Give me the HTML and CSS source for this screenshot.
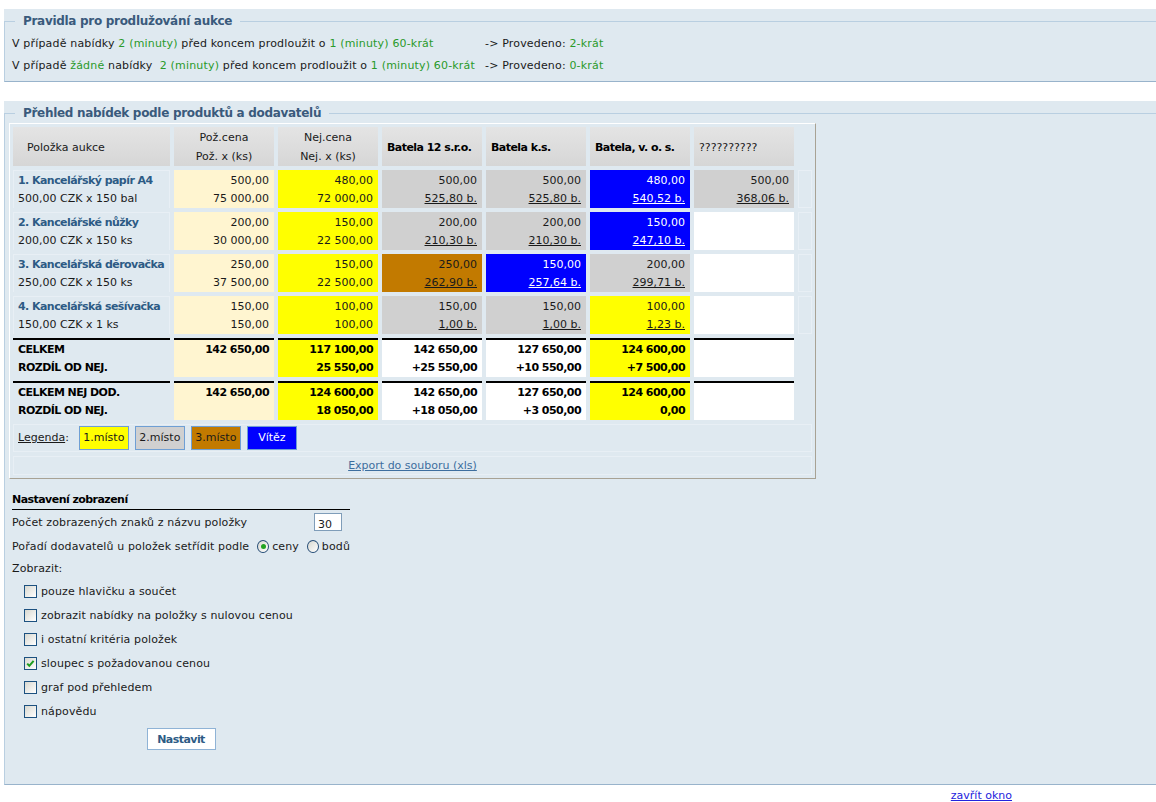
FILE: index.html
```html
<!DOCTYPE html>
<html lang="cs">
<head>
<meta charset="utf-8">
<title>Přehled nabídek</title>
<link rel="stylesheet" href="styles.css">
</head>
<body>
<div class="panel panel-rules">
  <fieldset class="frame">
    <legend>Pravidla pro prodlužování aukce</legend>
    <table class="rules">
      <tr>
        <td class="rule-text">V případě nabídky <span class="g">2 (minuty)</span> před koncem prodloužit o <span class="g">1 (minuty) 60-krát</span></td>
        <td>-&gt; Provedeno: <span class="g">2-krát</span></td>
      </tr>
      <tr>
        <td class="rule-text">V případě <span class="g">žádné</span> nabídky&nbsp; <span class="g">2 (minuty)</span> před koncem prodloužit o <span class="g">1 (minuty) 60-krát</span></td>
        <td>-&gt; Provedeno: <span class="g">0-krát</span></td>
      </tr>
    </table>
  </fieldset>
</div>

<div class="panel panel-offers">
  <fieldset class="frame">
    <legend>Přehled nabídek podle produktů a dodavatelů</legend>
    <div class="offer-box">
      <table class="offers">
        <colgroup>
          <col class="c-item"><col class="c-num"><col class="c-num"><col class="c-num"><col class="c-num"><col class="c-num"><col class="c-num"><col class="c-end">
        </colgroup>
        <thead>
          <tr>
            <th class="h h-item">Položka aukce</th>
            <th class="h h-center">Pož.cena<br>Pož. x (ks)</th>
            <th class="h h-center">Nej.cena<br>Nej. x (ks)</th>
            <th class="h h-sup">Batela 12 s.r.o.</th>
            <th class="h h-sup">Batela k.s.</th>
            <th class="h h-sup">Batela, v. o. s.</th>
            <th class="h h-unk">??????????</th>
            <th class="h-none"></th>
          </tr>
        </thead>
        <tbody>
          <tr>
            <td class="item"><span class="iname b">1. Kancelářský papír A4</span><br>500,00 CZK x 150 bal</td>
            <td class="num cream">500,00<br>75 000,00</td>
            <td class="num yellow">480,00<br>72 000,00</td>
            <td class="num gray">500,00<br><a class="pts">525,80 b.</a></td>
            <td class="num gray">500,00<br><a class="pts">525,80 b.</a></td>
            <td class="num blue">480,00<br><a class="pts">540,52 b.</a></td>
            <td class="num gray">500,00<br><a class="pts">368,06 b.</a></td>
            <td class="faint"></td>
          </tr>
          <tr>
            <td class="item"><span class="iname b">2. Kancelářské nůžky</span><br>200,00 CZK x 150 ks</td>
            <td class="num cream">200,00<br>30 000,00</td>
            <td class="num yellow">150,00<br>22 500,00</td>
            <td class="num gray">200,00<br><a class="pts">210,30 b.</a></td>
            <td class="num gray">200,00<br><a class="pts">210,30 b.</a></td>
            <td class="num blue">150,00<br><a class="pts">247,10 b.</a></td>
            <td class="white"></td>
            <td class="faint"></td>
          </tr>
          <tr>
            <td class="item"><span class="iname b">3. Kancelářská děrovačka</span><br>250,00 CZK x 150 ks</td>
            <td class="num cream">250,00<br>37 500,00</td>
            <td class="num yellow">150,00<br>22 500,00</td>
            <td class="num brown">250,00<br><a class="pts">262,90 b.</a></td>
            <td class="num blue">150,00<br><a class="pts">257,64 b.</a></td>
            <td class="num gray">200,00<br><a class="pts">299,71 b.</a></td>
            <td class="white"></td>
            <td class="faint"></td>
          </tr>
          <tr>
            <td class="item"><span class="iname b">4. Kancelářská sešívačka</span><br>150,00 CZK x 1 ks</td>
            <td class="num cream">150,00<br>150,00</td>
            <td class="num yellow">100,00<br>100,00</td>
            <td class="num gray">150,00<br><a class="pts">1,00 b.</a></td>
            <td class="num gray">150,00<br><a class="pts">1,00 b.</a></td>
            <td class="num yellow">100,00<br><a class="pts">1,23 b.</a></td>
            <td class="white"></td>
            <td class="faint"></td>
          </tr>
          <tr class="total">
            <td class="item b">CELKEM<br>ROZDÍL OD NEJ.</td>
            <td class="num cream b">142 650,00<br>&nbsp;</td>
            <td class="num yellow b">117 100,00<br>25 550,00</td>
            <td class="num white b">142 650,00<br>+25 550,00</td>
            <td class="num white b">127 650,00<br>+10 550,00</td>
            <td class="num yellow b">124 600,00<br>+7 500,00</td>
            <td class="white"></td>
            <td class="none"></td>
          </tr>
          <tr class="total">
            <td class="item b">CELKEM NEJ DOD.<br>ROZDÍL OD NEJ.</td>
            <td class="num cream b">142 650,00<br>&nbsp;</td>
            <td class="num yellow b">124 600,00<br>18 050,00</td>
            <td class="num white b">142 650,00<br>+18 050,00</td>
            <td class="num white b">127 650,00<br>+3 050,00</td>
            <td class="num yellow b">124 600,00<br>0,00</td>
            <td class="white"></td>
            <td class="none"></td>
          </tr>
          <tr>
            <td class="faint legend-cell" colspan="8">
              <div class="legend-line">
                <span class="legend-label"><u>Legenda</u>:</span>
                <span class="swatch sw-yellow">1.místo</span>
                <span class="swatch sw-gray">2.místo</span>
                <span class="swatch sw-brown">3.místo</span>
                <span class="swatch sw-blue">Vítěz</span>
              </div>
            </td>
          </tr>
          <tr>
            <td class="faint export-cell" colspan="8"><a class="export">Export do souboru (xls)</a></td>
          </tr>
        </tbody>
      </table>
    </div>

    <div class="settings">
      <div class="set-title b">Nastavení zobrazení</div>
      <div class="set-row">
        <span>Počet zobrazených znaků z názvu položky</span>
        <span class="count-input">30</span>
      </div>
      <div class="set-row">
        <span>Pořadí dodavatelů u položek setřídit podle</span>
        <span class="radio on"></span><span>ceny</span>
        <span class="radio"></span><span>bodů</span>
      </div>
      <div class="set-row show-label">Zobrazit:</div>
      <div class="set-row cb-row"><span class="cb"></span>pouze hlavičku a součet</div>
      <div class="set-row cb-row"><span class="cb"></span>zobrazit nabídky na položky s nulovou cenou</div>
      <div class="set-row cb-row"><span class="cb"></span>i ostatní kritéria položek</div>
      <div class="set-row cb-row"><span class="cb"><svg width="11" height="11" viewBox="0 0 11 11"><path d="M2.2 5.6 L4.3 7.8 L8.6 2.8" fill="none" stroke="#1f9e1f" stroke-width="2"/></svg></span>sloupec s požadovanou cenou</div>
      <div class="set-row cb-row"><span class="cb"></span>graf pod přehledem</div>
      <div class="set-row cb-row"><span class="cb"></span>nápovědu</div>
      <div class="btn-row"><button class="btn b" type="button">Nastavit</button></div>
    </div>
  </fieldset>
</div>

<div class="footer"><a class="close-link" href="#">zavřít okno</a></div>
</body>
</html>
```

FILE: styles.css
```css
body {
  margin: 0;
  font-family: "DejaVu Sans", Verdana, sans-serif;
  font-size: 11px;
  color: #1a1a1a;
  background: #fff;
}

.b {
  font-weight: bold;
  letter-spacing: -0.55px;
}

.panel {
  background: #dfe9f0;
  margin-left: 4px;
  padding-top: 4px;
}

.panel-rules { margin-top: 9px; }
.panel-offers { margin-top: 19px; }

.frame {
  margin: 0;
  min-width: 0;
  border: 1px solid #b9cfe1;
  border-right: 0;
  border-bottom-color: #98b3cb;
}

.panel-rules .frame { padding: 4px 0 4px 7px; }
.panel-offers .frame { padding: 2px 0 0 4px; }

legend {
  font-size: 12px;
  font-weight: bold;
  letter-spacing: -0.3px;
  color: #3a5a7c;
  line-height: 16px;
  padding: 0 8px;
}

.panel-rules legend { margin-left: 3px; }
.panel-offers legend { margin-left: 6px; }

.rules { border-collapse: collapse; letter-spacing: 0.17px; }
.rules td { padding: 0; height: 22px; line-height: 22px; white-space: nowrap; }
.rules .rule-text { width: 473px; }

.g { color: #2a9a2a; }

/* offers table */
.offer-box {
  display: inline-block;
  border: 1px solid;
  border-color: #fff #a8a294 #a8a294 #fff;
}

.offers {
  border-spacing: 4px;
  margin: -1px;
  table-layout: fixed;
  width: 807px;
}

.c-item { width: 157px; }
.c-num { width: 100px; }
.c-end { width: 14px; }

.offers td {
  padding: 2px 5px 0;
  line-height: 18px;
  vertical-align: top;
  white-space: nowrap;
}

.h {
  height: 37px;
  padding: 1px 5px 0;
  line-height: 19px;
  font-weight: normal;
  vertical-align: middle;
  background: linear-gradient(#e4e4e4, #d6d6d6);
  color: #1a1a1a;
}

.h-item { text-align: left; padding-left: 14px; }
.h-center { text-align: center; }
.h.h-sup { text-align: left; color: #000; font-weight: bold; letter-spacing: -0.55px; }
.h-unk { text-align: left; }
.h-none { padding: 0; }

.item {
  background: #dfe9f0;
  border: 1px solid #e8eff5;
  border-bottom: 0;
}
.offers td.item { padding: 1px 4px 0; }

.iname { color: #2d5b85; }

.num { text-align: right; }
.cream { background: #fff5d0; }
.yellow { background: #ffff00; }
.gray { background: #d0d0d0; }
.brown { background: #c27a00; }
.blue { background: #0000ff; color: #fff; }
.white { background: #fff; }

.pts { color: inherit; text-decoration: underline; }

.faint {
  background: #dfe9f0;
  border: 1px solid #e8eff5;
}
.none { background: transparent; }

.total td { color: #000; }
.offers .total td { padding-top: 1px; padding-bottom: 0; }
.total td:not(.none) { border-top: 2px solid #000; }
.offers .total td.item { border-left: 0; border-right: 0; border-bottom: 0; padding: 1px 5px 0; }

.offers td.legend-cell { padding: 1px 4px; }
.legend-line { display: flex; align-items: center; }
.legend-label { margin-right: 10px; }
.legend-label u { text-decoration: underline; }
.swatch {
  width: 50px;
  height: 24px;
  border: 1px solid #6f9fd4;
  display: flex;
  align-items: center;
  justify-content: center;
  margin-right: 6px;
  box-sizing: border-box;
}
.sw-yellow { background: #ffff00; }
.sw-gray { background: #d0d0d0; }
.sw-brown { background: #c27a00; }
.sw-blue { background: #0000ff; color: #fff; }

.offers td.export-cell { text-align: center; padding: 0; line-height: 17px; }
.export { color: #3d6e9e; text-decoration: underline; }

/* settings */
.settings {
  width: 338px;
  margin: 10px 0 0 3px;
  padding-bottom: 34px;
}

.set-title {
  color: #000;
  line-height: 16px;
  padding-bottom: 1px;
  border-bottom: 1px solid #000;
}

.set-row {
  display: flex;
  align-items: center;
  height: 24px;
  white-space: nowrap;
  letter-spacing: 0.12px;
}

.count-input {
  margin-left: auto;
  margin-right: 8px;
  width: 28px;
  height: 18px;
  box-sizing: border-box;
  border: 1px solid #7f9db9;
  background: #fff;
  padding: 4px 0 0 3px;
  line-height: 13px;
  letter-spacing: 0;
}

.radio {
  width: 13px;
  height: 13px;
  box-sizing: border-box;
  border: 1px solid #264d77;
  border-radius: 50%;
  background: linear-gradient(135deg, #d8d8d0, #fff);
  margin: 0 3px 0 8px;
  display: inline-flex;
  align-items: center;
  justify-content: center;
}
.radio.on::after {
  content: "";
  width: 5px;
  height: 5px;
  border-radius: 50%;
  background: #22a322;
}

.show-label { height: 21px; }

.cb-row { padding-left: 12px; }
.cb {
  width: 13px;
  height: 13px;
  box-sizing: border-box;
  border: 1px solid #1c5180;
  background: linear-gradient(135deg, #d8d8d0, #fff);
  margin-right: 4px;
  display: inline-flex;
  align-items: center;
  justify-content: center;
}

.btn-row { display: flex; justify-content: center; margin-top: 5px; }
.btn {
  width: 69px;
  height: 22px;
  border: 1px solid #8fb3d6;
  background: #fff;
  font-family: "DejaVu Sans", Verdana, sans-serif;
  font-size: 11px;
  color: #2d5b85;
  padding: 0;
}

.footer {
  display: flex;
  justify-content: flex-end;
  padding: 4px 144px 0 0;
  line-height: 14px;
}
.close-link { color: #2323dd; text-decoration: underline; }
```
